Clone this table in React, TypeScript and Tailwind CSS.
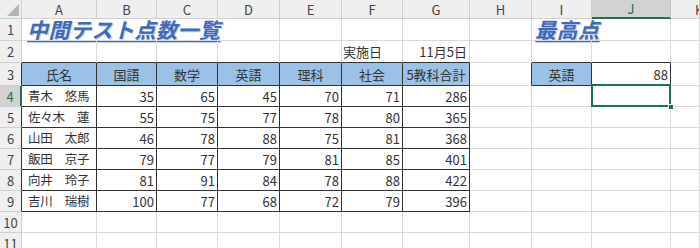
import React from "react";

const FONT = { fontFamily: '"Noto Sans CJK JP", "Noto Sans", sans-serif' };

const G = "border-[#d9d9d9]";

function Hdr({ children, sel = false, last = false }: { children?: React.ReactNode; sel?: boolean; last?: boolean }) {
  return (
    <div
      className={
        "flex items-center text-[13px] leading-none overflow-hidden border-r border-b " +
        (sel
          ? "bg-[#d2d2d2] text-[#217346] border-r-[#c6c6c6] border-b-2 border-b-[#217346] justify-center"
          : last
          ? "bg-[#efefef] text-[#444] border-[#d0d0d0] justify-start pl-[24px]"
          : "bg-[#efefef] text-[#444] border-[#d0d0d0] justify-center")
      }
    >
      {children}
    </div>
  );
}

function RowHdr({ n, sel = false, dark = false }: { n: number; sel?: boolean; dark?: boolean }) {
  return (
    <div
      className={
        "flex items-center justify-center text-[13px] leading-none overflow-hidden border-b border-b-[#d0d0d0] " +
        (sel
          ? "bg-[#d2d2d2] text-[#217346] border-r-2 border-r-[#217346]"
          : dark
          ? "bg-[#efefef] text-[#444] border-r border-r-[#333]"
          : "bg-[#efefef] text-[#444] border-r border-r-[#d0d0d0]")
      }
    >
      {n}
    </div>
  );
}

function Blank({ r = false, b = false }: { r?: boolean; b?: boolean }) {
  return (
    <div
      className={
        "border-r border-b " +
        (r ? "border-r-[#333] " : "border-r-[#d9d9d9] ") +
        (b ? "border-b-[#333]" : "border-b-[#d9d9d9]")
      }
    />
  );
}

function Num({ v, blue = false }: { v: React.ReactNode; blue?: boolean }) {
  return (
    <div
      className={
        "flex items-center justify-end pr-[2px] text-[13px] leading-none text-[#333] border-r border-b border-[#333] " +
        (blue ? "bg-[#9bc2e6]" : "bg-white")
      }
    >
      {v}
    </div>
  );
}

function HeadCell({ v }: { v: string }) {
  return (
    <div className="flex items-center justify-center text-[13px] leading-none text-[#333] bg-[#9bc2e6] border-r border-b border-[#333]">
      {v}
    </div>
  );
}

function Name({ chars }: { chars: string[] }) {
  return (
    <div className="flex items-center justify-between pl-[6px] pr-[7px] text-[12.5px] leading-none text-[#333] border-r border-b border-[#333]">
      {chars.map((c, i) => (
        <span key={i} className="w-[12px] text-center">
          {c}
        </span>
      ))}
    </div>
  );
}

const data: { name: string[]; nums: number[] }[] = [
  { name: ["青", "木", "　", "悠", "馬"], nums: [35, 65, 45, 70, 71, 286] },
  { name: ["佐", "々", "木", "　", "蓮"], nums: [55, 75, 77, 78, 80, 365] },
  { name: ["山", "田", "　", "太", "郎"], nums: [46, 78, 88, 75, 81, 368] },
  { name: ["飯", "田", "　", "京", "子"], nums: [79, 77, 79, 81, 85, 401] },
  { name: ["向", "井", "　", "玲", "子"], nums: [81, 91, 84, 78, 88, 422] },
  { name: ["吉", "川", "　", "瑞", "樹"], nums: [100, 77, 68, 72, 79, 396] },
];

export default function App() {
  return (
    <div className="w-[700px] h-[248px] overflow-hidden bg-white" style={FONT}>
      <div className="grid grid-cols-[22px_75px_60px_61px_62px_62px_61px_67px_62px_60px_79px_29px] grid-rows-[19px_22px_22px_23px_21px_21px_21px_21px_21px_21px_21px_21px]">
        {/* column headers */}
        <div className="relative bg-[#efefef] border-r border-b border-[#d0d0d0]">
          <div className="absolute right-[2px] bottom-[2px] w-0 h-0 border-l-[12px] border-l-transparent border-b-[12px] border-b-[#b5b5b5]" />
        </div>
        <Hdr>A</Hdr>
        <Hdr>B</Hdr>
        <Hdr>C</Hdr>
        <Hdr>D</Hdr>
        <Hdr>E</Hdr>
        <Hdr>F</Hdr>
        <Hdr>G</Hdr>
        <Hdr>H</Hdr>
        <Hdr>I</Hdr>
        <Hdr sel>J</Hdr>
        <Hdr last>K</Hdr>

        {/* row 1 */}
        <RowHdr n={1} />
        <div className="col-span-3 flex items-end pl-[5px] border-r border-b border-[#d9d9d9]">
          <span
            className="block text-[21px] leading-[21px] font-bold italic underline decoration-1 underline-offset-[3px] text-[#4169b8] whitespace-nowrap tracking-[0.5px]"
            style={{ textShadow: "1px 1px 0 #c3d3ee" }}
          >
            中間テスト点数一覧
          </span>
        </div>
        <Blank />
        <Blank />
        <Blank />
        <Blank />
        <Blank />
        <div className="col-span-2 flex items-end pl-[3px] border-r border-b border-[#d9d9d9]">
          <span
            className="block text-[21px] leading-[21px] font-bold italic underline decoration-1 underline-offset-[3px] text-[#4169b8] whitespace-nowrap tracking-[0.5px]"
            style={{ textShadow: "1px 1px 0 #c3d3ee" }}
          >
            最高点
          </span>
        </div>
        <Blank />

        {/* row 2 */}
        <RowHdr n={2} />
        <Blank b />
        <Blank b />
        <Blank b />
        <Blank b />
        <Blank b />
        <div className="flex items-center pl-[1px] text-[13px] leading-none text-[#333] border-r border-r-[#d9d9d9] border-b border-b-[#333]">
          実施日
        </div>
        <div className="flex items-center justify-end pr-[2px] text-[13px] leading-none text-[#333] border-r border-r-[#d9d9d9] border-b border-b-[#333]">
          11月5日
        </div>
        <Blank />
        <Blank b />
        <Blank b />
        <Blank />

        {/* row 3 */}
        <RowHdr n={3} dark />
        <HeadCell v="氏名" />
        <HeadCell v="国語" />
        <HeadCell v="数学" />
        <HeadCell v="英語" />
        <HeadCell v="理科" />
        <HeadCell v="社会" />
        <HeadCell v="5教科合計" />
        <Blank r />
        <HeadCell v="英語" />
        <Num v={88} />
        <Blank />

        {/* rows 4-9 */}
        {data.map((row, i) => (
          <React.Fragment key={i}>
            <RowHdr n={i + 4} sel={i === 0} dark={i !== 0} />
            <Name chars={row.name} />
            {row.nums.map((n, j) => (
              <Num key={j} v={n} />
            ))}
            <Blank />
            <Blank />
            {i === 0 ? (
              <div className={"relative border-r border-b " + G}>
                <div className="absolute -top-[2px] -left-[1px] -right-[1px] -bottom-[1px] border-2 border-[#217346]" />
                <div className="absolute -right-[4px] -bottom-[4px] w-[6px] h-[6px] bg-[#217346] border border-white" />
              </div>
            ) : (
              <Blank />
            )}
            <Blank />
          </React.Fragment>
        ))}

        {/* rows 10-11 */}
        {[10, 11].map((n) => (
          <React.Fragment key={n}>
            <RowHdr n={n} />
            <Blank />
            <Blank />
            <Blank />
            <Blank />
            <Blank />
            <Blank />
            <Blank />
            <Blank />
            <Blank />
            <Blank />
            <Blank />
          </React.Fragment>
        ))}
      </div>
    </div>
  );
}
